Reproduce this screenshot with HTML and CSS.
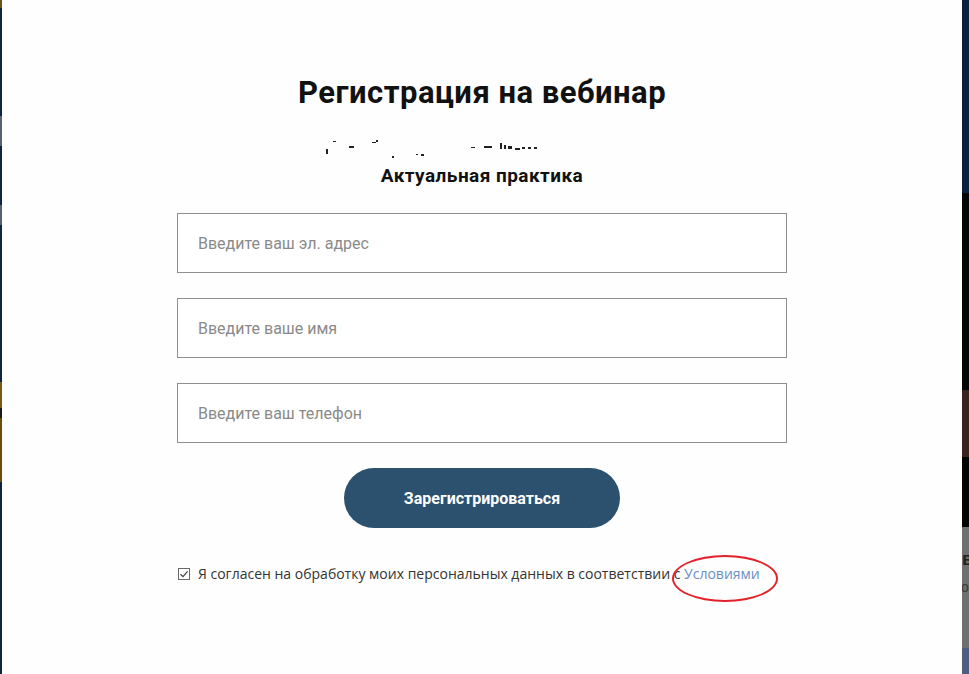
FILE: index.html
```html
<!DOCTYPE html>
<html lang="ru">
<head>
<meta charset="utf-8">
<title>Регистрация на вебинар</title>
<link rel="stylesheet" href="styles.css">
</head>
<body>
<div class="page">
  <div class="edge-left">
    <span class="el el-top"></span>
    <span class="el el-gray1"></span>
    <span class="el el-gray2"></span>
    <span class="el el-orange"></span>
    <span class="el el-dark"></span>
  </div>
  <main class="modal">
    <h1 class="title">Регистрация на вебинар</h1>
    <div class="garbled" aria-hidden="true">
      <svg width="230" height="24" viewBox="0 0 230 24">
        <g fill="#222">
          <rect x="16" y="14" width="2" height="5"/>
          <rect x="23" y="6" width="3" height="1"/>
          <rect x="39" y="11" width="5" height="2"/>
          <rect x="62" y="7" width="4" height="1"/>
          <rect x="66" y="5" width="2" height="2"/>
          <rect x="82" y="21" width="2" height="2"/>
          <rect x="106" y="19" width="2" height="1"/>
          <rect x="111" y="19" width="3" height="2"/>
          <rect x="161" y="12" width="4" height="1"/>
          <rect x="174" y="11" width="8" height="2"/>
          <rect x="190" y="8" width="2" height="6"/>
          <rect x="194" y="10" width="2" height="4"/>
          <rect x="198" y="11" width="4" height="3"/>
          <rect x="205" y="13" width="5" height="2"/>
          <rect x="212" y="12" width="3" height="2"/>
          <rect x="218" y="12" width="3" height="2"/>
          <rect x="224" y="12" width="3" height="2"/>
        </g>
      </svg>
    </div>
    <h2 class="subtitle">Актуальная практика</h2>
    <form class="form">
      <input class="field" type="email" placeholder="Введите ваш эл. адрес">
      <input class="field" type="text" placeholder="Введите ваше имя">
      <input class="field" type="tel" placeholder="Введите ваш телефон">
      <button class="submit" type="button">Зарегистрироваться</button>
      <label class="agree">
        <span class="box">
          <svg width="10" height="10" viewBox="0 0 10 10"><path d="M1.5 5.2 L4 7.6 L8.6 2.4" fill="none" stroke="#444" stroke-width="1.3"/></svg>
        </span>
        <span class="agree-text">Я согласен на обработку моих персональных данных в соответствии с <a class="link" href="#">Условиями</a><span class="mark"></span></span>
      </label>
    </form>
  </main>
  <div class="edge-right">
    <span class="er er-navy"></span>
    <span class="er er-black"></span>
    <span class="er er-brown"></span>
    <span class="er er-black2"></span>
    <span class="er er-gray"><b>в</b><i>о</i></span>
    <span class="er er-blue"></span>
  </div>
</div>
</body>
</html>
```

FILE: styles.css
```css
html, body {
  margin: 0;
  padding: 0;
  background: #fdfdfd;
}
.page {
  display: flex;
  width: 969px;
  height: 674px;
  overflow: hidden;
}
.edge-left {
  width: 2px;
  flex: none;
  background: #0d2444;
  display: flex;
  flex-direction: column;
}
.el { display: block; width: 2px; }
.el-top { height: 8px; background: #6b5320; margin-bottom: 108px; }
.el-gray1 { height: 30px; background: #5a6272; margin-bottom: 59px; }
.el-gray2 { height: 20px; background: #586070; margin-bottom: 157px; }
.el-orange { height: 26px; background: #7a5a10; }
.el-dark { height: 64px; background: #6d4c0c; border-top: 10px solid #1a1a1a; }

.modal {
  width: 960px;
  flex: none;
  background: #fefefe;
  display: flex;
  flex-direction: column;
  align-items: center;
  font-family: Roboto, "Liberation Sans", sans-serif;
}
.title {
  margin: 75px 0 0;
  font-size: 31px;
  line-height: 36px;
  font-weight: 700;
  color: #111;
  letter-spacing: 0.5px;
}
.garbled {
  margin-top: 24px;
  height: 24px;
  width: 230px;
  margin-left: -114px;
}
.garbled svg { display: block; }
.subtitle {
  margin: 4px 0 0;
  font-size: 19px;
  line-height: 26px;
  font-weight: 700;
  color: #111;
  letter-spacing: 0.45px;
}
.form {
  width: 610px;
  margin-top: 24px;
  display: flex;
  flex-direction: column;
  align-items: center;
  gap: 25px;
}
.field {
  box-sizing: border-box;
  width: 610px;
  height: 60px;
  border: 1px solid #8f8f8f;
  border-radius: 0;
  padding: 0 20px;
  font-family: Roboto, "Liberation Sans", sans-serif;
  font-size: 16px;
  color: #333;
  background: #fff;
  outline: none;
}
.field::placeholder { color: #8a8a8a; }
.submit {
  width: 276px;
  height: 60px;
  border: none;
  border-radius: 30px;
  background: #2b516f;
  color: #fff;
  font-family: Roboto, "Liberation Sans", sans-serif;
  font-size: 16px;
  font-weight: 700;
  cursor: pointer;
}
.agree {
  align-self: flex-start;
  margin-top: 11px;
  display: flex;
  align-items: center;
  gap: 8px;
  font-family: "Open Sans", "Liberation Sans", sans-serif;
  font-size: 14px;
  line-height: 20px;
  color: #333;
}
.box {
  box-sizing: border-box;
  width: 12px;
  height: 12px;
  border: 1px solid #6a6a6a;
  display: flex;
  align-items: center;
  justify-content: center;
  background: #fff;
  margin-left: 1px;
}
.box svg { display: block; }
.agree-text { position: relative; }
.link { color: #6a8fc6; text-decoration: none; }
.mark {
  position: absolute;
  box-sizing: border-box;
  right: -18px;
  top: -9px;
  width: 106px;
  height: 47px;
  border: 2.5px solid #e3232b;
  border-radius: 50%;
}

.edge-right {
  width: 7px;
  flex: none;
  display: flex;
  flex-direction: column;
}
.er { display: block; width: 7px; overflow: hidden; }
.er-navy { height: 193px; background: #0c2142; }
.er-black { height: 197px; background: #050505; }
.er-brown { height: 67px; background: #3a2220; }
.er-black2 { height: 70px; background: #030303; }
.er-gray {
  height: 121px;
  background: #6f6f6f;
  position: relative;
  font-family: "Liberation Sans", sans-serif;
}
.er-gray b {
  position: absolute;
  left: 0;
  top: 22px;
  font-size: 18px;
  color: #222;
}
.er-gray i {
  position: absolute;
  left: -1px;
  top: 52px;
  font-style: normal;
  font-size: 14px;
  color: #3a3a3a;
}
.er-blue { height: 26px; background: #4f5d80; }
```
